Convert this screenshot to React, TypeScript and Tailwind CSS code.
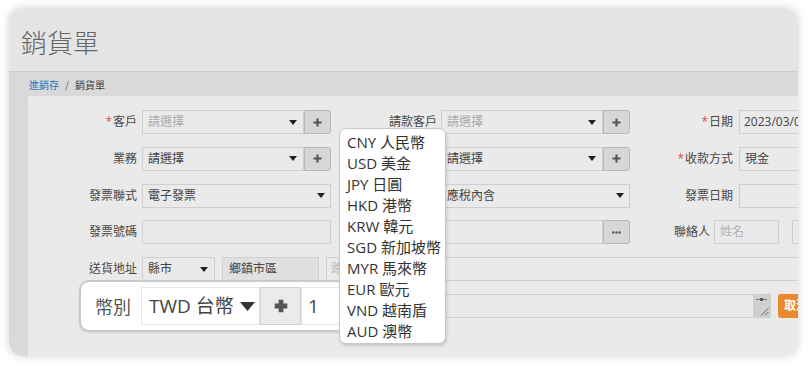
import React from "react";

const Arrow = ({ className = "" }: { className?: string }) => (
  <svg width="8" height="5" viewBox="0 0 8 5" className={className}>
    <path d="M0 0 H8 L4 5 Z" fill="#222" />
  </svg>
);

const Plus = ({ size = 9, stroke = 2.4, color = "#555" }: { size?: number; stroke?: number; color?: string }) => (
  <svg width={size} height={size} viewBox="0 0 10 10">
    <path d="M5 0.5 V9.5 M0.5 5 H9.5" stroke={color} strokeWidth={stroke} />
  </svg>
);

const Star = () => <span className="text-[#d9534f] mr-[1px]">*</span>;

function Label({ w, pr, children }: { w: string; pr: string; children: React.ReactNode }) {
  return (
    <div className={`${w} ${pr} shrink-0 text-right text-[12px] text-[#474747]`}>{children}</div>
  );
}

function PlusBtn({ children }: { children?: React.ReactNode }) {
  return (
    <div className="w-[27px] h-full shrink-0 bg-[#d7d7d7] border border-[#b8b8b8] rounded-r-[3px] flex items-center justify-center">
      {children ?? <Plus />}
    </div>
  );
}

export default function App() {
  return (
    <div className="relative w-[808px] h-[366px] bg-white overflow-hidden font-['Open_Sans','Noto_Sans_CJK_TC',sans-serif] pt-[8px] pl-[9px]">
      <div className="w-[789px] h-[348px] rounded-[14px] overflow-hidden shadow-[0_0_8px_rgba(0,0,0,0.18)] flex flex-col">
        {/* header */}
        <div className="h-[64px] shrink-0 bg-[#e5e5e5] border-b border-[#cdcdcd] flex items-center pl-[12px] pt-[4px]">
          <span className="text-[26px] font-light text-[#666] font-['Noto_Sans_CJK_TC',sans-serif]">銷貨單</span>
        </div>
        {/* breadcrumb */}
        <div className="h-[24px] shrink-0 bg-[#d9d9d9] flex items-center pl-[20px] text-[10px] font-['Noto_Sans_CJK_TC',sans-serif]">
          <span className="text-[#3572be]">進銷存</span>
          <span className="text-[#666] mx-[6px]">/</span>
          <span className="text-[#444]">銷貨單</span>
        </div>
        {/* body */}
        <div className="flex-1 flex min-h-0">
          <div className="w-[19px] shrink-0 bg-[#d9d9d9]" />
          <div className="flex-1 bg-[#eaeaea] overflow-hidden pt-[14px] flex flex-col gap-[12.8px] rounded-tl-[3px]">
            {/* row 1 */}
            <div className="h-[24px] flex items-center shrink-0">
              <Label w="w-[114px]" pr="pr-[5px]"><Star />客戶</Label>
              <div className="w-[189px] h-full flex shrink-0">
                <div className="flex-1 h-full border border-[#cfcfcf] flex items-center justify-between pl-[5px] pr-[6px] text-[12px] text-[#aaa]">
                  <span>請選擇</span>
                  <Arrow />
                </div>
                <PlusBtn />
              </div>
              <Label w="w-[110px]" pr="pr-[4px]">請款客戶</Label>
              <div className="w-[189px] h-full flex shrink-0">
                <div className="flex-1 h-full border border-[#cfcfcf] flex items-center justify-between pl-[5px] pr-[6px] text-[12px] text-[#aaa]">
                  <span>請選擇</span>
                  <Arrow />
                </div>
                <PlusBtn />
              </div>
              <Label w="w-[109px]" pr="pr-[6px]"><Star />日期</Label>
              <div className="w-[120px] h-full shrink-0 border border-[#cfcfcf] flex items-center pl-[4px] text-[12px] text-[#444]">
                2023/03/01
              </div>
            </div>
            {/* row 2 */}
            <div className="h-[24px] flex items-center shrink-0">
              <Label w="w-[114px]" pr="pr-[5px]">業務</Label>
              <div className="w-[189px] h-full flex shrink-0">
                <div className="flex-1 h-full border border-[#cfcfcf] flex items-center justify-between pl-[5px] pr-[6px] text-[12px] text-[#444]">
                  <span>請選擇</span>
                  <Arrow />
                </div>
                <PlusBtn />
              </div>
              <Label w="w-[110px]" pr="pr-[4px]">&nbsp;</Label>
              <div className="w-[189px] h-full flex shrink-0">
                <div className="flex-1 h-full border border-[#cfcfcf] flex items-center justify-between pl-[5px] pr-[6px] text-[12px] text-[#444]">
                  <span>請選擇</span>
                  <Arrow />
                </div>
                <PlusBtn />
              </div>
              <Label w="w-[109px]" pr="pr-[6px]"><Star />收款方式</Label>
              <div className="w-[120px] h-full shrink-0 border border-[#cfcfcf] flex items-center pl-[5px] text-[12px] text-[#444]">
                現金
              </div>
            </div>
            {/* row 3 */}
            <div className="h-[24px] flex items-center shrink-0">
              <Label w="w-[114px]" pr="pr-[5px]">發票聯式</Label>
              <div className="w-[189px] h-full shrink-0 border border-[#cfcfcf] flex items-center justify-between pl-[5px] pr-[5px] text-[12px] text-[#444]">
                <span>電子發票</span>
                <Arrow />
              </div>
              <Label w="w-[110px]" pr="pr-[4px]">&nbsp;</Label>
              <div className="w-[189px] h-full shrink-0 border border-[#cfcfcf] flex items-center justify-between pl-[5px] pr-[5px] text-[12px] text-[#444]">
                <span>應稅內含</span>
                <Arrow />
              </div>
              <Label w="w-[109px]" pr="pr-[6px]">發票日期</Label>
              <div className="w-[120px] h-full shrink-0 border border-[#cfcfcf]" />
            </div>
            {/* row 4 */}
            <div className="h-[24px] flex items-center shrink-0">
              <Label w="w-[114px]" pr="pr-[5px]">發票號碼</Label>
              <div className="w-[189px] h-full shrink-0 border border-[#cfcfcf]" />
              <Label w="w-[110px]" pr="pr-[4px]">&nbsp;</Label>
              <div className="w-[189px] h-full flex shrink-0">
                <div className="flex-1 h-full border border-[#cfcfcf]" />
                <PlusBtn>
                  <svg width="9" height="3" viewBox="0 0 9 3">
                    <circle cx="1.3" cy="1.5" r="1.2" fill="#555" />
                    <circle cx="4.5" cy="1.5" r="1.2" fill="#555" />
                    <circle cx="7.7" cy="1.5" r="1.2" fill="#555" />
                  </svg>
                </PlusBtn>
              </div>
              <Label w="w-[84px]" pr="pr-[4px]">聯絡人</Label>
              <div className="w-[65px] h-full shrink-0 border border-[#cfcfcf] flex items-center pl-[5px] text-[12px] text-[#b0b0b0]">
                姓名
              </div>
              <div className="w-[13px] shrink-0" />
              <div className="w-[60px] h-full shrink-0 border border-[#cfcfcf]" />
            </div>
            {/* row 5 */}
            <div className="h-[24px] flex items-center shrink-0">
              <Label w="w-[114px]" pr="pr-[5px]">送貨地址</Label>
              <div className="w-[73px] h-full shrink-0 border border-[#cfcfcf] flex items-center justify-between pl-[5px] pr-[6px] text-[12px] text-[#444]">
                <span>縣市</span>
                <Arrow />
              </div>
              <div className="w-[7px] shrink-0" />
              <div className="w-[97px] h-full shrink-0 border border-[#cfcfcf] bg-[#e0e0e0] flex items-center pl-[6px] text-[12px] text-[#444]">
                鄉鎮市區
              </div>
              <div className="w-[7px] shrink-0" />
              <div className="w-[520px] h-full shrink-0 border border-[#cfcfcf] flex items-center pl-[4px] text-[12px] text-[#bbb]">
                路
              </div>
            </div>
            {/* row 6 */}
            <div className="h-[24px] flex items-center shrink-0">
              <div className="w-[114px] shrink-0" />
              <div className="w-[629px] h-full shrink-0 border border-[#cfcfcf] flex justify-end">
                <div className="w-[17px] h-full bg-[#d0d0d0] relative">
                  <div className="absolute left-[3px] right-[3px] top-[4px] h-px bg-[#777]" />
                  <div className="absolute left-[7px] top-[3px] w-[3px] h-[3px] bg-[#555]" />
                  <svg className="absolute right-[1px] bottom-[1px]" width="9" height="9" viewBox="0 0 9 9">
                    <path d="M8.5 1 L1 8.5 M8.5 5 L5 8.5" stroke="#555" strokeWidth="0.9" />
                  </svg>
                </div>
              </div>
              <div className="w-[7px] shrink-0" />
              <div className="w-[40px] h-full shrink-0 bg-[#e8892b] rounded-[3px] flex items-center pl-[6px] text-[12px] text-white font-bold">
                取消
              </div>
            </div>
          </div>
        </div>
      </div>

      {/* currency popup */}
      <div className="absolute left-[79px] top-[280px] w-[330px] h-[52px] bg-white border-2 border-[#c9c9c9] rounded-[10px] flex items-center pl-[14px] shadow-[0_1px_2px_rgba(0,0,0,0.1)]">
        <span className="text-[18px] text-[#555] font-['Noto_Sans_CJK_TC',sans-serif] w-[46px] shrink-0">幣別</span>
        <div className="w-[119px] h-[38px] shrink-0 border border-[#e6e6e6] flex items-center pl-[7px] pr-[4px] justify-between">
          <span className="text-[19px] text-[#444]">TWD 台幣</span>
          <svg width="15" height="9" viewBox="0 0 15 9">
            <path d="M0 0 H15 L7.5 9 Z" fill="#333" />
          </svg>
        </div>
        <div className="w-[41px] h-[38px] shrink-0 bg-[#ebebeb] border border-[#d0d0d0] flex items-center justify-center">
          <Plus size={14} stroke={3.4} color="#555" />
        </div>
        <div className="w-[110px] h-[38px] shrink-0 border border-[#e6e6e6] flex items-center pl-[6px] text-[19px] text-[#444]">
          1
        </div>
      </div>

      {/* dropdown */}
      <div className="absolute left-[339px] top-[128px] w-[107px] h-[216px] bg-white border border-[#c9c9c9] rounded-[7px] shadow-[1px_2px_3px_rgba(0,0,0,0.15)] pt-[3px] pl-[7px] text-[15px] leading-[21px] text-[#333] whitespace-nowrap">
        {["CNY 人民幣", "USD 美金", "JPY 日圓", "HKD 港幣", "KRW 韓元", "SGD 新加坡幣", "MYR 馬來幣", "EUR 歐元", "VND 越南盾", "AUD 澳幣"].map((t) => (
          <div key={t}>{t}</div>
        ))}
      </div>
    </div>
  );
}
